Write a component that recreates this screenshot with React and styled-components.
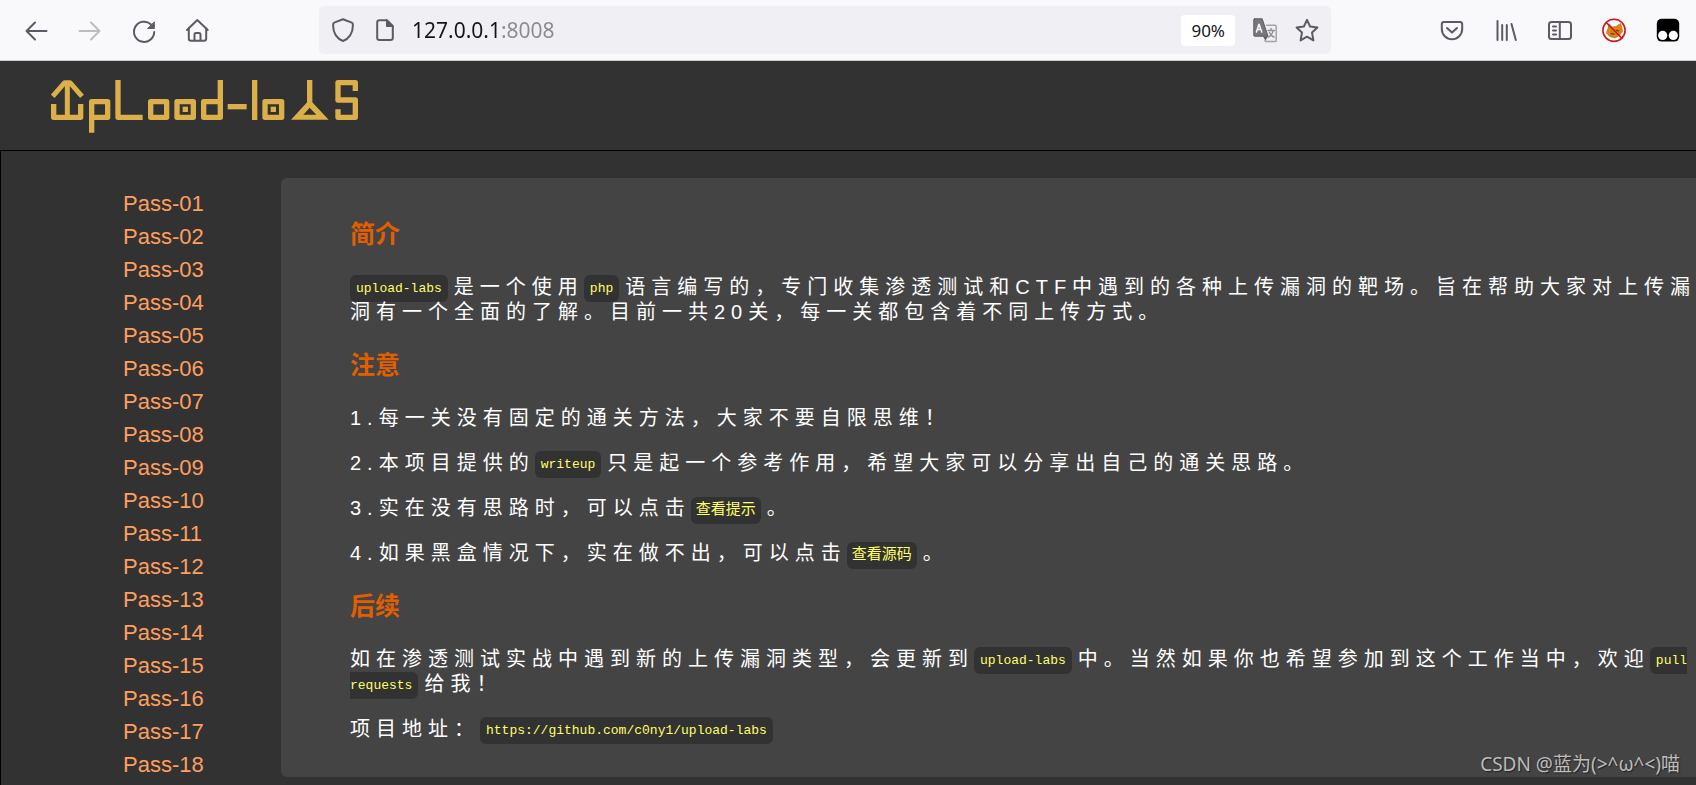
import React, { useState } from "react";
import styled, { createGlobalStyle } from "styled-components";

const sans = `"Liberation Sans", Arial, "Noto Sans CJK SC", sans-serif`;

const GlobalStyle = createGlobalStyle`
  * {
    box-sizing: border-box;
  }
  body {
    margin: 0;
    background: #323232;
    font-family: ${sans};
  }
`;

const Page = styled.div`
  display: flex;
  flex-direction: column;
  min-height: 100vh;
`;

// browser toolbar

const Toolbar = styled.nav`
  display: flex;
  align-items: center;
  height: 61px;
  padding: 0 6px 0 14px;
  background: #f9f9fb;
  border-bottom: 1px solid #ccc;
`;

const ToolGroup = styled.div`
  display: flex;
  gap: 10px;
`;

const ToolButton = styled.button`
  display: flex;
  align-items: center;
  justify-content: center;
  width: ${(p) => (p.$small ? 24 : 44)}px;
  height: ${(p) => (p.$small ? 24 : 44)}px;
  padding: 0;
  border: none;
  background: none;
  color: #5b5b66;
  cursor: pointer;

  &:disabled {
    color: #bcbcc1;
    cursor: default;
  }
`;

const Icon = styled.svg.attrs({ viewBox: "0 0 24 24", "aria-hidden": true })`
  display: block;
  width: 24px;
  height: 24px;
  overflow: visible;
  fill: none;
  stroke: currentColor;
  stroke-width: 2;
  stroke-linecap: round;
  stroke-linejoin: round;
`;

const AddressBar = styled.form`
  display: flex;
  flex: 1;
  align-items: center;
  gap: 18px;
  height: 48px;
  margin: 0 99px;
  padding: 0 12px;
  background: #f0f0f4;
  border-radius: 5px;
`;

// host is dark, port is greyed out
const AddressInput = styled.input`
  flex: 1;
  min-width: 0;
  height: 32px;
  margin-left: -3px;
  padding: 0;
  border: none;
  outline: none;
  background: linear-gradient(to right, #15141a 89px, #8a8a92 89px);
  -webkit-background-clip: text;
  background-clip: text;
  color: transparent;
  caret-color: #15141a;
  font-family: "Noto Sans", sans-serif;
  font-size: 21px;
`;

const ZoomButton = styled.button`
  height: 31px;
  padding: 0 10px;
  border: none;
  border-radius: 4px;
  background: #fff;
  color: #15141a;
  font-family: "Noto Sans", sans-serif;
  font-size: 17px;
`;

// site

const Header = styled.header`
  height: 89px;
  padding: 18px 51px;
  background: #323232;
`;

const Logo = styled.svg`
  display: block;
  width: 308px;
  height: 54px;
  fill: none;
  stroke: #dbb04a;
  stroke-width: 16;
  stroke-linecap: butt;
  stroke-linejoin: round;
`;

const Main = styled.main`
  display: flex;
  flex: 1;
  align-items: flex-start;
  padding: 27px 0 8px;
  border-top: 1px solid #000;
  border-left: 1px solid #000;
  overflow: hidden;
`;

const Menu = styled.ul`
  flex: none;
  width: 280px;
  margin: 0;
  padding: 9px 0 0 122px;
  list-style: none;
`;

const MenuLink = styled.a`
  color: #ff9f5f;
  font-size: 22px;
  line-height: 33px;
  text-decoration: none;
`;

// runs out past the right edge of the window
const Panel = styled.article`
  flex: 1;
  min-width: 0;
  margin-right: -24px;
  padding: 16px 0 15px 69px;
  background: #444;
  border-radius: 6px;
`;

const Title = styled.h3`
  margin: 24px 0;
  color: #e25f00;
  font-size: 25px;
  line-height: 33px;
`;

const Text = styled.p`
  margin: 0 0 20px;
  color: #fff;
  font-size: 20px;
  line-height: 25px;
  letter-spacing: 6px;
`;

const Code = styled.code`
  margin-right: 6px;
  padding: ${(p) => (p.$cjk ? 5 : 6)}px;
  border-radius: 6px;
  background: #323232;
  color: #ffff66;
  font-family: "Liberation Mono", "Noto Sans CJK SC", monospace;
  font-size: ${(p) => (p.$cjk ? 15 : 13)}px;
  line-height: 15px;
  letter-spacing: normal;
  vertical-align: ${(p) => (p.$cjk ? 1 : 2)}px;
`;

const Watermark = styled.div`
  position: absolute;
  right: 16px;
  bottom: 7px;
  color: #bdbdbd;
  font-family: "Noto Sans", "Noto Sans CJK SC", sans-serif;
  font-size: 19px;
  line-height: 28px;
  text-shadow: 1px 1px 1px #222;
`;

function SiteLogo() {
  return (
    <Logo viewBox="33 27 924 162" role="img" aria-label="upload-labs">
      <path d="M38 79L74 38H90L126 79M82 38V142" strokeWidth="15" />
      <path d="M41 102V142H122V102" />
      <path d="M155 188V95H203V142H160" />
      <path d="M234 30V142H308" />
      <path d="M332 95H380V142H332Z" />
      <path d="M411 95H460V142H411Z" />
      <path d="M428 118H444" />
      <path d="M541 30V142H491V95H541" />
      <path d="M563 110H620" />
      <path d="M644 30V150" />
      <path d="M675 95H725V142H675Z" />
      <path d="M692 118H708" />
      <path d="M809 30V102" />
      <path
        d="M753 149L802 96H816L866 149ZM790 134H829L809 113Z"
        fill="#dbb04a"
        fillRule="evenodd"
        stroke="none"
      />
      <path d="M946 63V38H894V90H946V142H894V118" />
    </Logo>
  );
}

function Toolbars() {
  const [address, setAddress] = useState("127.0.0.1:8008");

  return (
    <Toolbar>
      <ToolGroup>
        <ToolButton aria-label="Back">
          <Icon><path d="M22.5 13H2.5M11 4.5L2.5 13L11 21.5" /></Icon>
        </ToolButton>
        <ToolButton aria-label="Forward" disabled>
          <Icon><path d="M1.5 13H21.5M13 4.5L21.5 13L13 21.5" /></Icon>
        </ToolButton>
        <ToolButton aria-label="Reload">
          <Icon>
            <path d="M22.2 14A10.1 10.1 0 1 1 18.8 6.2" />
            <path d="M22.3 4.2V10.5H16Z" fill="currentColor" strokeWidth="1" />
          </Icon>
        </ToolButton>
        <ToolButton aria-label="Home">
          <Icon>
            <path d="M1 12L11.3 2L21.7 12" />
            <path d="M2.8 10.5V20.5Q2.8 22.7 5 22.7H18Q20.2 22.7 20.2 20.5V10.5" />
            <path d="M8.5 22V16.5Q8.5 15 10 15H13Q14.5 15 14.5 16.5V22" />
          </Icon>
        </ToolButton>
      </ToolGroup>

      <AddressBar onSubmit={(e) => e.preventDefault()}>
        <ToolButton type="button" $small aria-label="Tracking protection">
          <Icon>
            <path d="M12 1.2L3.2 4.6Q2.2 5 2.2 6V8.5C2.2 15 6 20.8 12 23C18 20.8 21.8 15 21.8 8.5V6Q21.8 5 20.8 4.6Z" />
          </Icon>
        </ToolButton>
        <ToolButton type="button" $small aria-label="Site information">
          <Icon>
            <path d="M14 2.2H6.5Q4.2 2.2 4.2 4.5V20Q4.2 22 6.5 22H17.5Q19.8 22 19.8 20V8Z" />
            <path d="M13.5 2V8.5H20Z" fill="currentColor" strokeWidth="1" />
          </Icon>
        </ToolButton>
        <AddressInput
          type="text"
          aria-label="Address"
          spellCheck="false"
          value={address}
          onChange={(e) => setAddress(e.target.value)}
        />
        <ZoomButton type="button">90%</ZoomButton>
        <ToolButton type="button" $small aria-label="Translate">
          <Icon>
            <path d="M13.5 7.2H22Q23.2 7.2 23.2 8.4V22.4Q23.2 23.6 22 23.6H13Q12.2 23.6 12 22.6" stroke="#a2a2a8" strokeWidth="1.5" />
            <path d="M15 12.5H21.5M18 10.5V12.5M20 13C19.5 16 17.5 18 15.5 19M16.5 14.5C17.5 17 19 18.5 21 19" stroke="#8f8f96" strokeWidth="1.4" />
            <path d="M1.5 .8H9.2L15 18.2H1.5Q.8 18.2 .8 17.5V1.5Q.8 .8 1.5 .8Z" fill="#77777c" stroke="#5b5b60" strokeWidth="1" />
            <path d="M10 18.5H15L12.4 22.5Z" fill="#5b5b60" stroke="none" />
            <path d="M3.4 14L6 6.2L8.8 14M4.5 11.4H7.7" stroke="#fff" strokeWidth="1.5" />
          </Icon>
        </ToolButton>
        <ToolButton type="button" $small aria-label="Bookmark">
          <Icon>
            <path d="M12 1.8L15.1 8.5L22.4 9.4L17 14.4L18.4 22.4L12 18.7L5.6 22.4L7 14.4L1.6 9.4L8.9 8.5Z" />
          </Icon>
        </ToolButton>
      </AddressBar>

      <ToolGroup>
        <ToolButton aria-label="Pocket">
          <Icon>
            <path d="M4 4H20Q22.2 4 22.2 6.2V11A10.2 10.2 0 0 1 1.8 11V6.2Q1.8 4 4 4Z" />
            <path d="M7 10L12 14.6L17 10" />
          </Icon>
        </ToolButton>
        <ToolButton aria-label="Library">
          <Icon><path d="M3.5 3V22M8.2 7V22M12.8 7V22M17.5 6L21.8 22" /></Icon>
        </ToolButton>
        <ToolButton aria-label="Sidebars">
          <Icon>
            <rect x="1" y="4" width="22" height="17" rx="2.5" />
            <path d="M11.8 4V21M5 8.4H8M5 12.4H8M5 16.4H8" />
          </Icon>
        </ToolButton>
        <ToolButton aria-label="Proxy off">
          <Icon>
            <circle cx="12" cy="12.3" r="11" fill="#fff" stroke="none" />
            <path d="M5 12.5L6 10.5L7 5.8L10 9L14 8.5L18.5 5.5L20 10L20.5 13.5L17.5 17.5L13 20L7.5 18.5L4.8 15.5Z" fill="#e38310" stroke="#a8641a" strokeWidth=".6" />
            <path d="M9 15.5L12 16.2M14.5 12.5L16.5 12.7" stroke="#5c4a35" strokeWidth="1.4" />
            <circle cx="12" cy="12.3" r="11.1" stroke="#d0161b" strokeWidth="1.6" />
            <path d="M4.2 4.5L19.8 20.1" stroke="#d0161b" strokeWidth="1.6" />
          </Icon>
        </ToolButton>
        <ToolButton aria-label="Tampermonkey">
          <Icon>
            <rect x=".8" y=".8" width="22.4" height="22.8" rx="5" fill="#000" stroke="none" />
            <circle cx="6.7" cy="17.4" r="4.6" fill="#fff" stroke="none" />
            <circle cx="17.3" cy="17.4" r="4.6" fill="#fff" stroke="none" />
          </Icon>
        </ToolButton>
      </ToolGroup>
    </Toolbar>
  );
}

const passes = Array.from({ length: 18 }, (_, i) => `Pass-${String(i + 1).padStart(2, "0")}`);

function App() {
  return (
    <Page>
      <GlobalStyle />
      <Toolbars />

      <Header>
        <SiteLogo />
      </Header>

      <Main>
        <Menu>
          {passes.map((pass) => (
            <li key={pass}>
              <MenuLink href={`#${pass}`}>{pass}</MenuLink>
            </li>
          ))}
        </Menu>

        <Panel>
          <Title>简介</Title>
          <Text>
            <Code>upload-labs</Code>是一个使用<Code>php</Code>
            语言编写的，专门收集渗透测试和CTF中遇到的各种上传漏洞的靶场。旨在帮助大家对上传漏洞有一个全面的了解。目前一共20关，每一关都包含着不同上传方式。
          </Text>

          <Title>注意</Title>
          <Text>1.每一关没有固定的通关方法，大家不要自限思维！</Text>
          <Text>
            2.本项目提供的<Code>writeup</Code>
            只是起一个参考作用，希望大家可以分享出自己的通关思路。
          </Text>
          <Text>
            3.实在没有思路时，可以点击<Code $cjk>查看提示</Code>。
          </Text>
          <Text>
            4.如果黑盒情况下，实在做不出，可以点击<Code $cjk>查看源码</Code>。
          </Text>

          <Title>后续</Title>
          <Text>
            如在渗透测试实战中遇到新的上传漏洞类型，会更新到<Code>upload-labs</Code>
            中。当然如果你也希望参加到这个工作当中，欢迎<Code>pull requests</Code>给我！
          </Text>
          <Text>
            项目地址：<Code>https://github.com/c0ny1/upload-labs</Code>
          </Text>
        </Panel>
      </Main>

      <Watermark>CSDN @蓝为(&gt;^ω^&lt;)喵</Watermark>
    </Page>
  );
}

export default App;
